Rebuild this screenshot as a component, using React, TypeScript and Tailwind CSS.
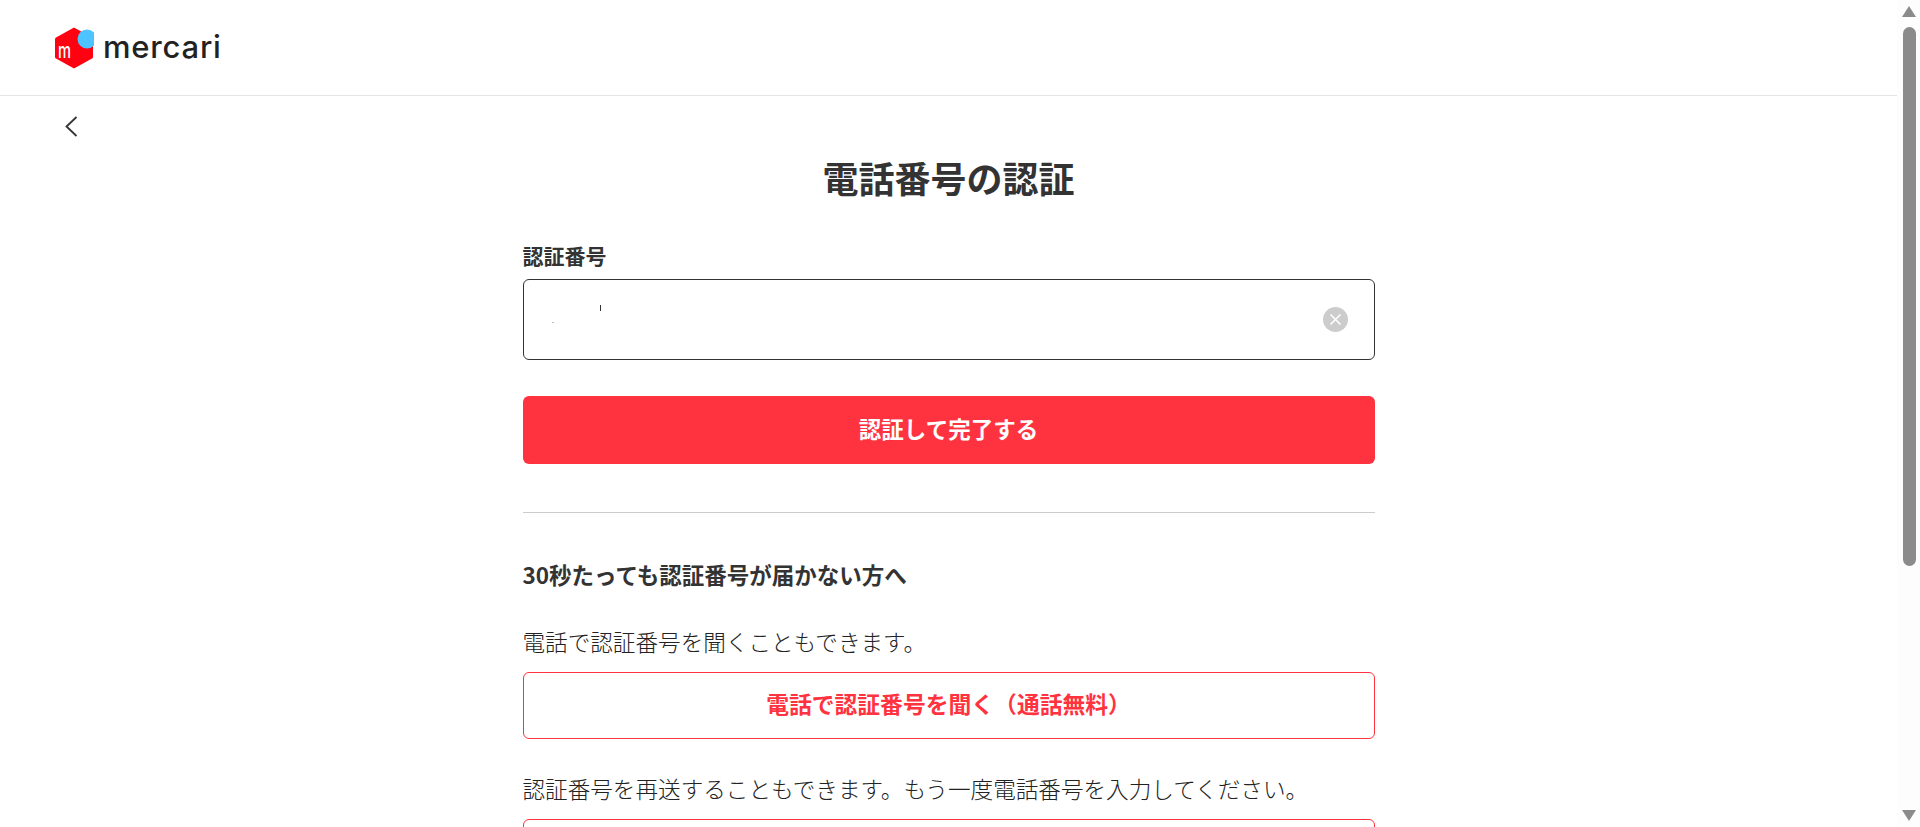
import React from "react";

const fontStack = { fontFamily: '"Noto Sans CJK JP", "Liberation Sans", sans-serif' };

function Logo() {
  return (
    <div className="flex items-center">
      <svg width="40" height="42" viewBox="0 0 40 42" className="block">
        <path
          d="M20 0.5 L38 10.5 Q39 11.1 39 12.5 L39 30 Q39 31 38 31.6 L20 41.5 L2 31.6 Q1 31 1 30 L1 12.5 Q1 11.1 2 10.5 Z"
          fill="#ff0211"
        />
        <text
          x="4"
          y="31"
          fill="#ffffff"
          fontSize="21"
          fontWeight="500"
          fontFamily="Inter, sans-serif"
          textLength="13"
          lengthAdjust="spacingAndGlyphs"
        >
          m
        </text>
        <circle cx="33" cy="12" r="9.5" fill="#4dc3ff" />
      </svg>
      <span
        className="ml-[9px] text-[31px] leading-none font-medium tracking-[0.8px] text-[#222222] -translate-y-[1px]"
        style={{ fontFamily: "Inter, Lato, sans-serif" }}
      >
        mercari
      </span>
    </div>
  );
}

function ScrollBar() {
  return (
    <div className="w-[23px] h-full shrink-0 bg-[#fdfdfd] flex flex-col items-center pl-[1px]">
      <svg width="16" height="12" viewBox="0 0 16 12" className="mt-[6px] block">
        <path d="M8 0 L15 11 L1 11 Z" fill="#8b8b8b" />
      </svg>
      <div className="mt-[9px] w-[13px] h-[539px] rounded-full bg-[#8b8b8b]" />
      <svg width="16" height="12" viewBox="0 0 16 12" className="mt-[244px] block">
        <path d="M1 0 L15 0 L8 11 Z" fill="#8b8b8b" />
      </svg>
    </div>
  );
}

function OutlineButton({ label }: { label: string }) {
  return (
    <button className="w-full h-[67px] shrink-0 rounded-[6px] border border-[#ff333f] bg-white text-[22.8px] font-bold text-[#ff333f] pb-[2px]">
      {label}
    </button>
  );
}

export default function App() {
  return (
    <div className="flex h-[827px] w-full overflow-hidden bg-white text-[#333333]" style={fontStack}>
      <div className="flex-1 min-w-0 h-full overflow-hidden">
        <header className="h-[96px] border-b border-[#e5e5e5] pl-[54px] flex items-center">
          <Logo />
        </header>

        <div className="h-0 pl-[65px] pt-[20px]">
          <svg width="13" height="21" viewBox="0 0 13 21" fill="none" className="block">
            <path d="M11.5 1 L1.5 10.5 L11.5 20" stroke="#333333" strokeWidth="1.8" />
          </svg>
        </div>

        <main className="w-[852px] mx-auto flex flex-col">
          <h1 className="mt-[35px] h-[52px] leading-[52px] text-center text-[36px] font-bold">電話番号の認証</h1>

          <label className="mt-[37px] h-[30px] leading-[30px] text-[21px] font-bold">認証番号</label>
          <div className="relative mt-[9px] h-[81px] rounded-[6px] border border-[#333333] flex items-center justify-end pr-[26px]">
            <span className="absolute left-[28px] top-[42px] w-[2px] h-[1px] bg-[#bbbbbb]" />
            <span className="absolute left-[76px] top-[25px] w-[1px] h-[6px] bg-[#333333]" />
            <svg width="25" height="25" viewBox="0 0 25 25" className="block">
              <circle cx="12.5" cy="12.5" r="12.5" fill="#cccccc" />
              <path d="M7.5 7.5 L17.5 17.5 M17.5 7.5 L7.5 17.5" stroke="#ffffff" strokeWidth="1.6" />
            </svg>
          </div>

          <button className="mt-[36px] h-[68px] rounded-[6px] bg-[#ff333f] text-[22.5px] font-bold text-white pb-[3px]">
            認証して完了する
          </button>

          <div className="mt-[48px] h-px bg-[#cccccc]" />

          <h2 className="mt-[44px] h-[34px] leading-[34px] text-[22.5px] font-bold">30秒たっても認証番号が届かない方へ</h2>

          <p className="mt-[34px] h-[34px] leading-[34px] text-[22.6px] font-light text-[#222222]">電話で認証番号を聞くこともできます。</p>
          <div className="mt-[13px]">
            <OutlineButton label="電話で認証番号を聞く（通話無料）" />
          </div>

          <p className="mt-[33px] h-[34px] leading-[34px] text-[22.6px] font-light text-[#222222]">
            認証番号を再送することもできます。もう一度電話番号を入力してください。
          </p>
          <div className="mt-[13px]">
            <div className="w-full h-[67px] rounded-[6px] border border-[#ff333f]" />
          </div>
        </main>
      </div>
      <ScrollBar />
    </div>
  );
}
